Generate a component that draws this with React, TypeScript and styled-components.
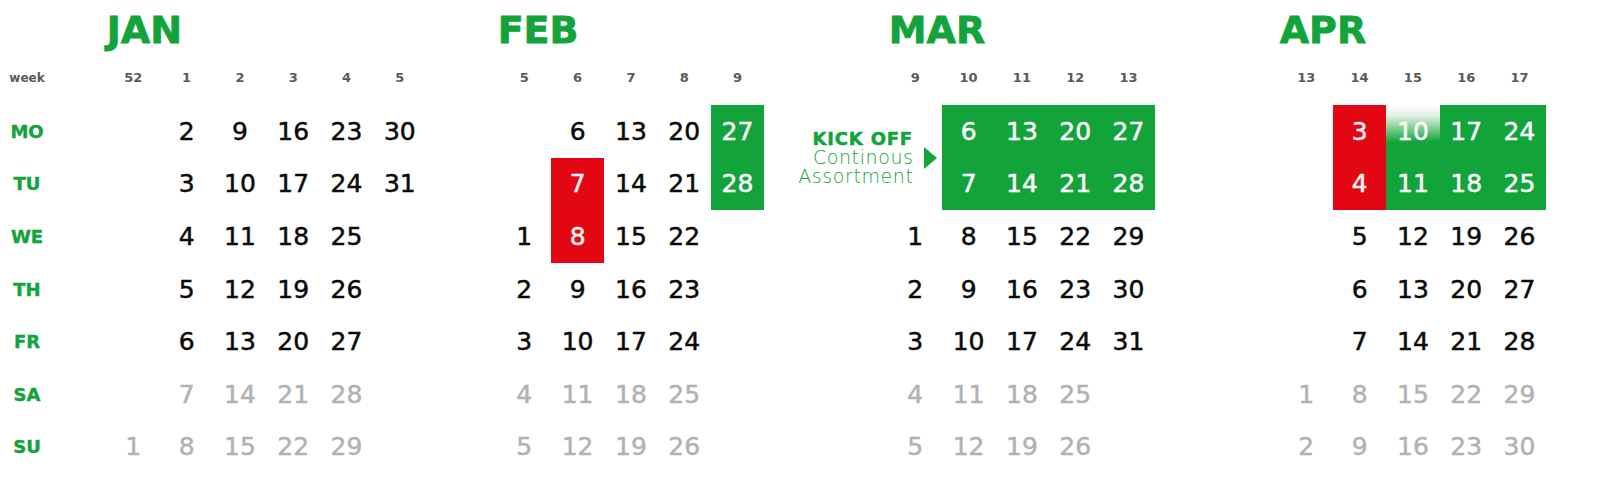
import styled, { createGlobalStyle } from "styled-components";

const GREEN = "#12a43a";
const RED = "#e30613";

const GlobalStyle = createGlobalStyle`
  body {
    margin: 0;
    background: #fff;
    font-family: "DejaVu Sans", "Liberation Sans", sans-serif;
  }
`;

const Page = styled.div`
  display: flex;
  width: 1600px;
  height: 486px;
  overflow: hidden;
`;

const LabelColumn = styled.div`
  width: 106.67px;
  flex-shrink: 0;
  display: flex;
  flex-direction: column;
`;

const TitleSpacer = styled.div`
  height: 50px;
`;

const WeekLabel = styled.div`
  width: 54px;
  height: 55px;
  display: flex;
  align-items: center;
  justify-content: center;
  font-size: 12px;
  font-weight: 700;
  color: #5a5a5a;
`;

const DayLabel = styled.div`
  width: 54px;
  height: 52.6px;
  display: flex;
  align-items: center;
  justify-content: center;
  font-size: 18px;
  font-weight: 700;
  color: ${GREEN};
  -webkit-text-stroke: 0.4px ${GREEN};
`;

const MonthBlock = styled.div<{ $last?: boolean }>`
  flex: ${(p) => (p.$last ? "1" : "0 0 391px")};
  display: flex;
  flex-direction: column;
`;

const MonthTitle = styled.div`
  height: 50px;
  box-sizing: border-box;
  padding-top: 10px;
  font-size: 38px;
  line-height: 40px;
  font-weight: 700;
  color: ${GREEN};
  -webkit-text-stroke: 0.8px ${GREEN};
`;

const Weeks = styled.div`
  display: flex;
`;

const WeekColumn = styled.div`
  width: 53.3px;
  flex-shrink: 0;
  display: flex;
  flex-direction: column;
`;

const WeekNum = styled.div`
  height: 55px;
  display: flex;
  align-items: center;
  justify-content: center;
  font-size: 13px;
  font-weight: 700;
  color: #5a5a5a;
`;

type Tone = "weekday" | "weekend" | "green" | "red" | "fade" | "empty";

const toneBg: Record<Tone, string> = {
  weekday: "transparent",
  weekend: "transparent",
  empty: "transparent",
  green: GREEN,
  red: RED,
  fade: `linear-gradient(to bottom, #ffffff 0%, #dcefdf 22%, ${GREEN} 70%)`,
};

const toneColor: Record<Tone, string> = {
  weekday: "#0a0a0a",
  weekend: "#b2b2b2",
  empty: "transparent",
  green: "#ffffff",
  red: "#fff4f4",
  fade: "#ffffff",
};

const DayCell = styled.div<{ $tone: Tone }>`
  height: 52.6px;
  display: flex;
  align-items: center;
  justify-content: center;
  font-size: 25px;
  color: ${(p) => toneColor[p.$tone]};
  -webkit-text-stroke: 0.5px ${(p) => toneColor[p.$tone]};
  background: ${(p) => toneBg[p.$tone]};
`;

const KickOff = styled.div`
  height: 105.2px;
  display: flex;
  align-items: center;
  justify-content: flex-end;
  padding-right: 5px;
  gap: 11px;
`;

const KickText = styled.div`
  flex-shrink: 0;
  display: flex;
  flex-direction: column;
  align-items: flex-end;
  color: ${GREEN};
`;

const KickTitle = styled.span`
  font-size: 18px;
  line-height: 18px;
  font-weight: 700;
  letter-spacing: 0.8px;
  -webkit-text-stroke: 0.5px ${GREEN};
`;

const KickLine = styled.span`
  font-size: 19px;
  line-height: 19px;
  font-weight: 200;
  letter-spacing: 0.6px;
  margin-right: -0.6px;
`;

const Arrow = styled.div`
  flex-shrink: 0;
  width: 0;
  height: 0;
  border-left: 13px solid ${GREEN};
  border-top: 11px solid transparent;
  border-bottom: 11px solid transparent;
`;

type Day = number | null;
interface Week {
  num: number;
  days: Day[];
  marks?: Partial<Record<number, Tone>>;
  kickoff?: boolean;
}
interface Month {
  name: string;
  weeks: Week[];
}

const range = (from: number, n: number) => Array.from({ length: n }, (_, i) => from + i);
const N = null;

const months: Month[] = [
  {
    name: "JAN",
    weeks: [
      { num: 52, days: [N, N, N, N, N, N, 1] },
      { num: 1, days: range(2, 7) },
      { num: 2, days: range(9, 7) },
      { num: 3, days: range(16, 7) },
      { num: 4, days: range(23, 7) },
      { num: 5, days: [30, 31, N, N, N, N, N] },
    ],
  },
  {
    name: "FEB",
    weeks: [
      { num: 5, days: [N, N, 1, 2, 3, 4, 5] },
      { num: 6, days: range(6, 7), marks: { 1: "red", 2: "red" } },
      { num: 7, days: range(13, 7) },
      { num: 8, days: range(20, 7) },
      { num: 9, days: [27, 28, N, N, N, N, N], marks: { 0: "green", 1: "green" } },
    ],
  },
  {
    name: "MAR",
    weeks: [
      { num: 9, days: [N, N, 1, 2, 3, 4, 5], kickoff: true },
      { num: 10, days: range(6, 7), marks: { 0: "green", 1: "green" } },
      { num: 11, days: range(13, 7), marks: { 0: "green", 1: "green" } },
      { num: 12, days: range(20, 7), marks: { 0: "green", 1: "green" } },
      { num: 13, days: [27, 28, 29, 30, 31, N, N], marks: { 0: "green", 1: "green" } },
    ],
  },
  {
    name: "APR",
    weeks: [
      { num: 13, days: [N, N, N, N, N, 1, 2] },
      { num: 14, days: range(3, 7), marks: { 0: "red", 1: "red" } },
      { num: 15, days: range(10, 7), marks: { 0: "fade", 1: "green" } },
      { num: 16, days: range(17, 7), marks: { 0: "green", 1: "green" } },
      { num: 17, days: range(24, 7), marks: { 0: "green", 1: "green" } },
    ],
  },
];

const dayNames = ["MO", "TU", "WE", "TH", "FR", "SA", "SU"];

function toneFor(week: Week, i: number): Tone {
  const mark = week.marks?.[i];
  if (mark) return mark;
  if (week.days[i] === null) return "empty";
  return i >= 5 ? "weekend" : "weekday";
}

function WeekCol({ week }: { week: Week }) {
  const start = week.kickoff ? 2 : 0;
  return (
    <WeekColumn>
      <WeekNum>{week.num}</WeekNum>
      {week.kickoff && (
        <KickOff>
          <KickText>
            <KickTitle>KICK OFF</KickTitle>
            <KickLine>Continous</KickLine>
            <KickLine>Assortment</KickLine>
          </KickText>
          <Arrow />
        </KickOff>
      )}
      {week.days.slice(start).map((d, idx) => {
        const i = idx + start;
        return (
          <DayCell key={i} $tone={toneFor(week, i)}>
            {d ?? ""}
          </DayCell>
        );
      })}
    </WeekColumn>
  );
}

export default function App() {
  return (
    <>
      <GlobalStyle />
      <Page>
        <LabelColumn>
          <TitleSpacer />
          <WeekLabel>week</WeekLabel>
          {dayNames.map((n) => (
            <DayLabel key={n}>{n}</DayLabel>
          ))}
        </LabelColumn>
        {months.map((m, mi) => (
          <MonthBlock key={m.name} $last={mi === months.length - 1}>
            <MonthTitle>{m.name}</MonthTitle>
            <Weeks>
              {m.weeks.map((w) => (
                <WeekCol key={w.num} week={w} />
              ))}
            </Weeks>
          </MonthBlock>
        ))}
      </Page>
    </>
  );
}
